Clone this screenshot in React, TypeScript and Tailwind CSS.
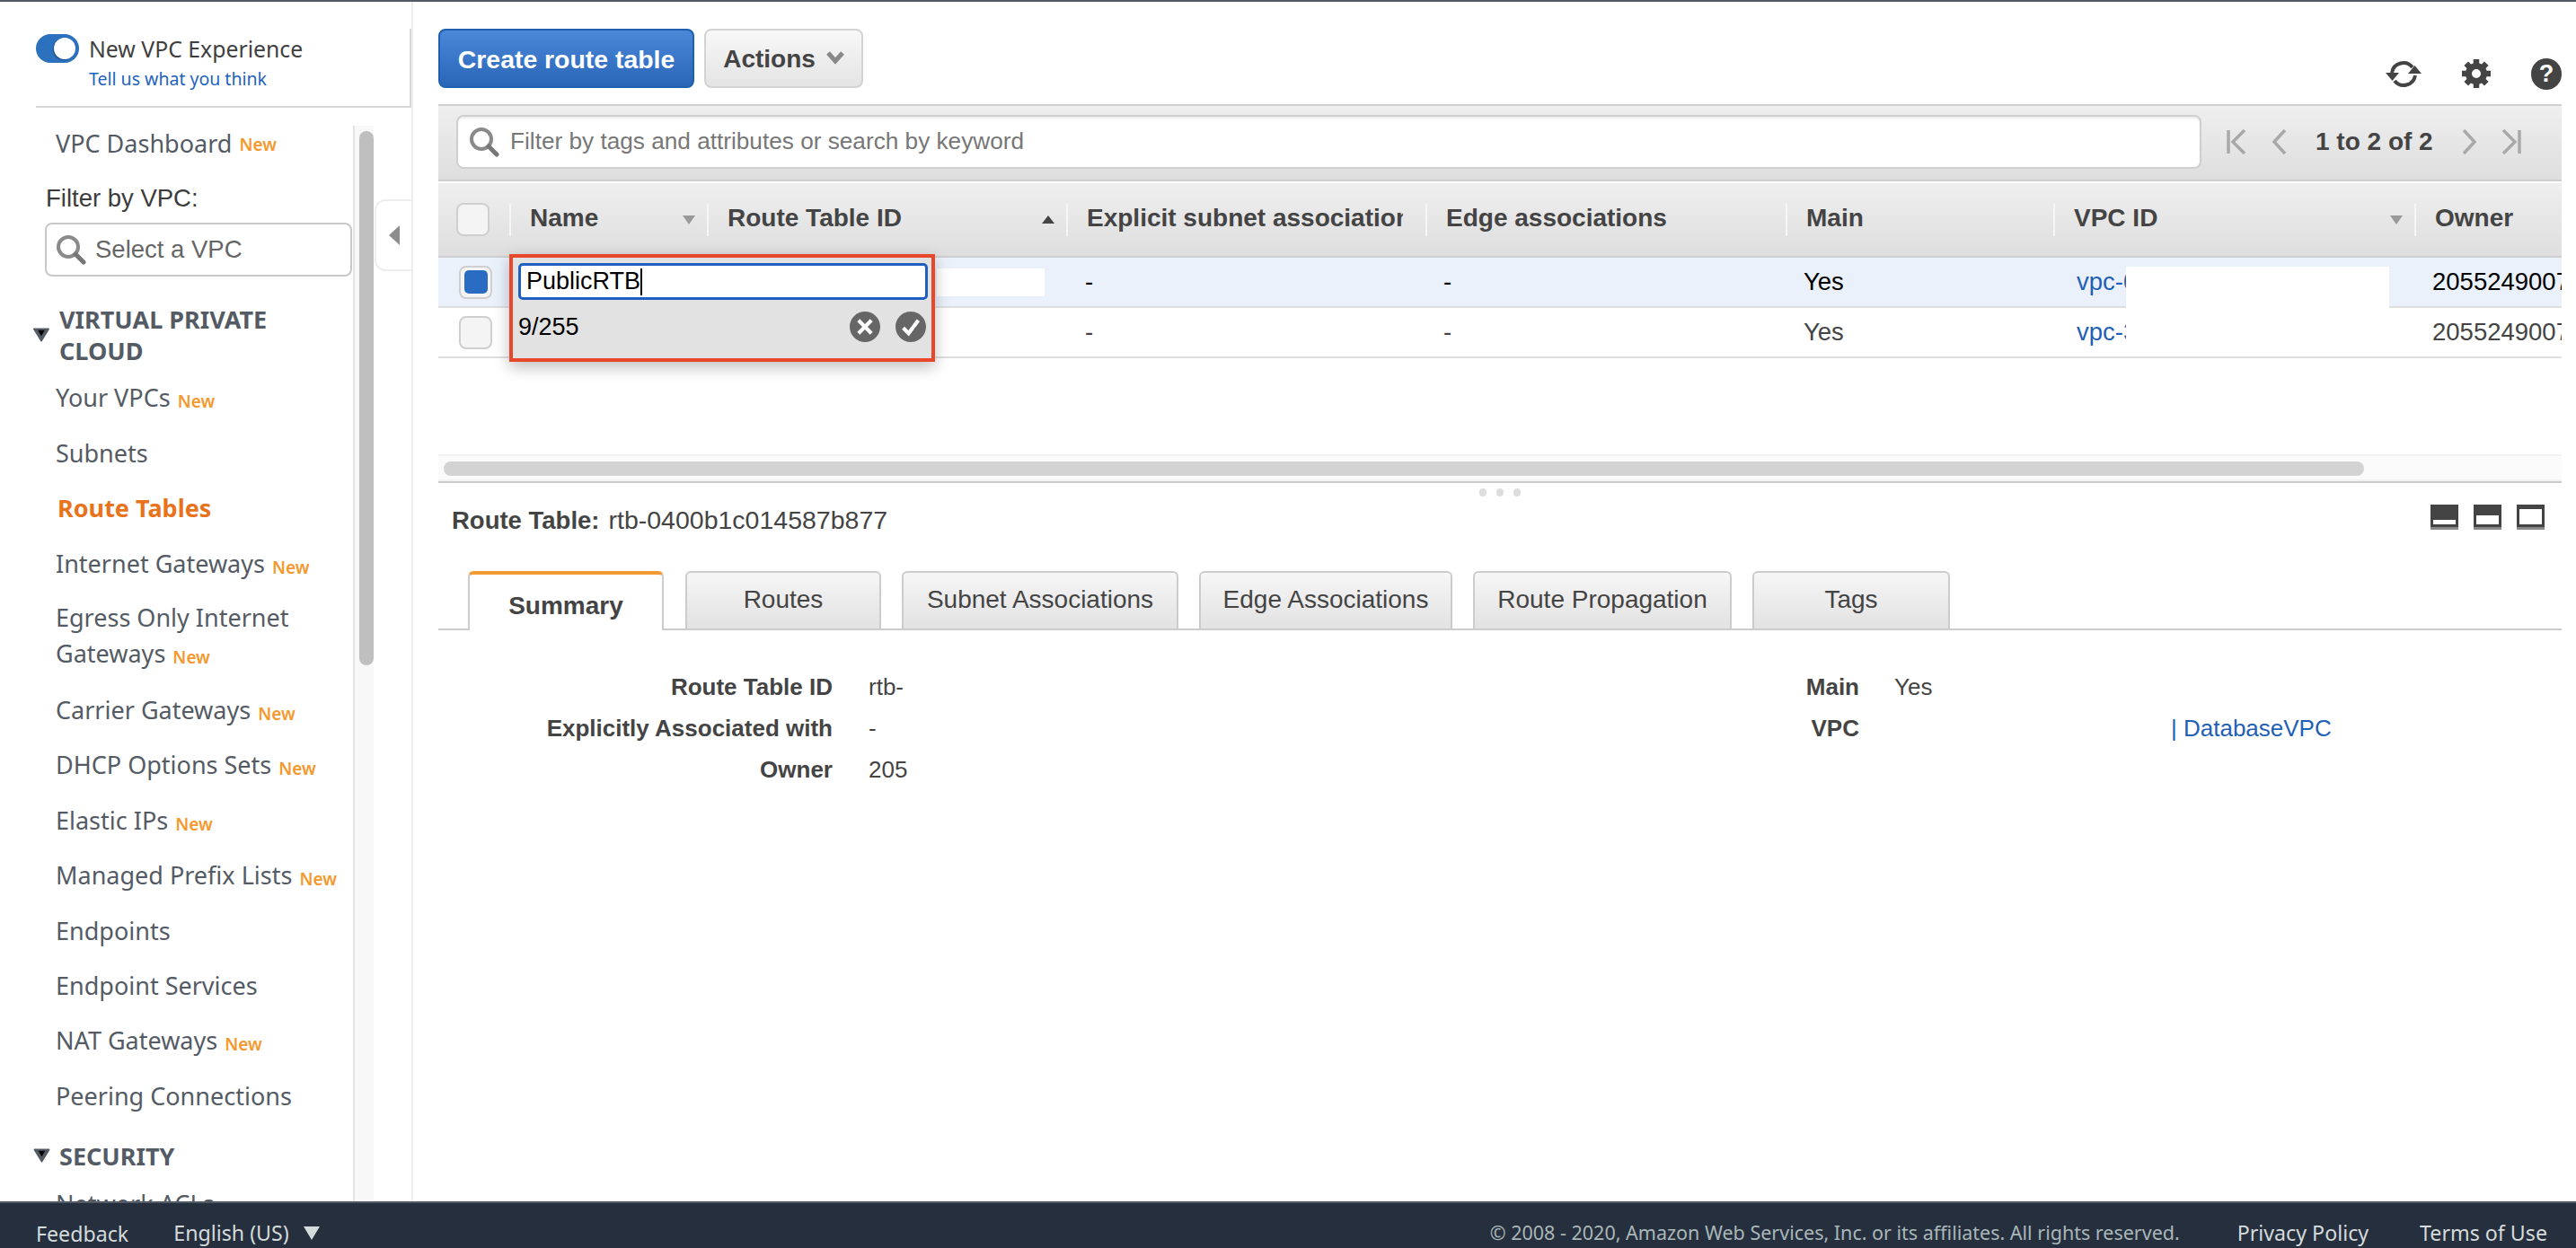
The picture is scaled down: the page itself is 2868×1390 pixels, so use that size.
import type { ReactNode } from 'react'

const ember = "font-['Noto_Sans',sans-serif]"
const helv = "font-['Liberation_Sans',Arial,sans-serif]"

const navItems: { label: ReactNode; isNew?: boolean; active?: boolean; tall?: boolean }[] = [
  { label: 'Your VPCs', isNew: true },
  { label: 'Subnets' },
  { label: 'Route Tables', active: true },
  { label: 'Internet Gateways', isNew: true },
  { label: 'Egress Only Internet Gateways', isNew: true, tall: true },
  { label: 'Carrier Gateways', isNew: true },
  { label: 'DHCP Options Sets', isNew: true },
  { label: 'Elastic IPs', isNew: true },
  { label: 'Managed Prefix Lists', isNew: true },
  { label: 'Endpoints' },
  { label: 'Endpoint Services' },
  { label: 'NAT Gateways', isNew: true },
  { label: 'Peering Connections' },
]

function NewTag() {
  return <span className="ml-2 inline-block translate-y-[1px] text-[19px] font-semibold text-[#f5992f]">New</span>
}

function SearchIcon({ className }: { className: string }) {
  return (
    <svg viewBox="0 0 34 34" className={className}>
      <circle cx="14" cy="14" r="11" fill="none" stroke="#8a8a8a" strokeWidth="4" />
      <path d="M22 22 L31 31" stroke="#777" strokeWidth="5" strokeLinecap="round" />
    </svg>
  )
}

function Caret({ className }: { className: string }) {
  return (
    <svg viewBox="0 0 20 17" className={className}>
      <path d="M1.5 1.5 H18.5 L10 15.5 Z" fill="#545b64" stroke="#545b64" strokeWidth="2" strokeLinejoin="round" />
      <path d="M6 3 H14 L10 10 Z" fill="#000" />
    </svg>
  )
}

function Sidebar() {
  return (
    <aside className={`relative flex w-[460px] shrink-0 flex-col overflow-hidden border-r-2 border-[#eeeeee] pt-[30px] ${ember}`}>
      <div className="ml-10 h-[88px] shrink-0 border-r-2 border-b-2 border-[#d8d8d8] pt-[6px]">
        <div className="flex items-center">
          <div className="flex h-8 w-12 items-center justify-end rounded-full bg-[#2c71bd] pr-[4px]">
            <div className="h-6 w-6 rounded-full bg-white shadow-[-1px_1px_1px_#1b4f8a]" />
          </div>
          <span className="ml-[11px] text-[24.8px] leading-8 text-[#3f3f3f]">New VPC Experience</span>
        </div>
        <div className="mt-[6px] ml-[59px] text-[19.5px] leading-6 text-[#1f63bd]">Tell us what you think</div>
      </div>

      <div className="flex min-h-0 flex-1">
        <div className="w-[393px] shrink-0 overflow-hidden pt-[10px]">
          <div className="flex h-[61px] items-center pl-[62px] text-[27px] whitespace-nowrap text-[#545b64]">
            VPC Dashboard
            <NewTag />
          </div>
          <div className={`mt-[10px] pl-[51px] text-[27.5px] leading-[40px] text-[#3c3c3c] ${helv}`}>Filter by VPC:</div>
          <div className="mt-[7px] ml-[50px] flex h-[60px] w-[342px] items-center rounded-lg border-2 border-[#c8c8c8] pl-[10px]">
            <SearchIcon className="h-[34px] w-[34px]" />
            <span className={`ml-[10px] text-[27.5px] text-[#666] ${helv}`}>Select a VPC</span>
          </div>
          <div className="mt-[30px] flex items-center pl-[36px]">
            <Caret className="h-[16px] w-[20px] shrink-0" />
            <div className="ml-[10px] text-[27px] leading-[35px] font-bold text-[#545b64]">
              VIRTUAL PRIVATE
              <br />
              CLOUD
            </div>
          </div>
          <ul className="mt-[5px]">
            {navItems.map((item, i) => (
              <li
                key={i}
                className={`flex items-center pl-[62px] text-[27px] ${item.tall ? 'h-[102px] w-[340px] leading-[40px]' : 'h-[61.4px]'} ${
                  item.active ? 'pl-[64px] font-bold text-[#e8731c]' : 'text-[#545b64]'
                }`}
              >
                <span>
                  {item.label}
                  {item.isNew && <NewTag />}
                </span>
              </li>
            ))}
          </ul>
          <div className="mt-[18px] flex items-center pl-[37px]">
            <Caret className="h-[16px] w-[19px] shrink-0" />
            <div className="ml-[10px] text-[27px] leading-[35px] font-bold text-[#545b64]">SECURITY</div>
          </div>
          <div className="mt-[16px] pl-[62px] text-[27px] text-[#545b64]">Network ACLs</div>
        </div>
        <div className="mt-[20px] w-[23px] shrink-0 border-l-2 border-[#e4e4e4] bg-[#f8f8f8] pt-[6px] pl-[5px]">
          <div className="h-[595px] w-4 rounded-full bg-[#bfbfbf]" />
        </div>
      </div>

      {/* collapse handle sits over the sidebar edge */}
      <div className="absolute top-[220px] right-0 flex h-[80px] w-[41px] items-center justify-center rounded-l-xl border-2 border-r-0 border-[#eeeeee] bg-white">
        <div className="h-0 w-0 border-y-[11px] border-r-[12px] border-y-transparent border-r-[#8d8d8d]" />
      </div>
    </aside>
  )
}

function Checkbox({ checked, header }: { checked?: boolean; header?: boolean }) {
  return (
    <div
      className={`flex h-[37px] w-[37px] items-center justify-center rounded-lg border-2 border-[#cfcfcf] bg-[#f4f4f4] ${header ? '' : 'ml-[3px]'}`}
    >
      {checked && <div className="h-[26px] w-[26px] rounded-[5px] bg-[#2a6cc2]" />}
    </div>
  )
}

function HeaderCell({ w, label, sort, clip }: { w: string; label: string; sort?: 'up' | 'down'; clip?: boolean }) {
  return (
    <div className={`${w} flex h-[36px] shrink-0 items-center justify-between border-l-2 border-[#f6f6f6] pr-[13px] pl-[21px]`}>
      <span className={`${clip ? 'w-[352px] overflow-hidden' : ''} -translate-y-[2px] whitespace-nowrap`}>{label}</span>
      {sort === 'down' && <div className="h-0 w-0 border-x-[7px] border-t-[10px] border-x-transparent border-t-[#999]" />}
      {sort === 'up' && <div className="h-0 w-0 border-x-[7px] border-b-[9px] border-x-transparent border-b-[#444]" />}
    </div>
  )
}

function TableRow({ selected, vpc }: { selected?: boolean; vpc: string }) {
  const color = selected ? 'bg-[#eaf1fb] text-black' : 'bg-white text-[#444]'
  return (
    <div className={`flex h-[56px] items-center border-b-2 border-[#dfdfdf] text-[27.5px] ${color}`}>
      <div className="w-[79px] shrink-0 pl-5">
        <Checkbox checked={selected} />
      </div>
      <div className="w-[620px] shrink-0">
        {selected && <div className="ml-[476px] h-[31px] w-[120px] bg-white" />}
      </div>
      <div className="w-[400px] shrink-0 pl-[21px]">-</div>
      <div className="w-[401px] shrink-0 pl-[20px]">-</div>
      <div className="w-[298px] shrink-0 pl-[20px]">Yes</div>
      <div className="flex h-full w-[402px] shrink-0 pl-[26px]">
        <span className="w-[55px] self-center overflow-hidden whitespace-nowrap text-[#1f5fb5]">{vpc}</span>
        {/* the redaction box runs over the first row's bottom rule */}
        <div className={`w-[293px] bg-white ${selected ? 'mt-[10px] h-[46px]' : 'h-[54px]'}`} />
      </div>
      <div className="pl-[20px] whitespace-nowrap">205524900700</div>
    </div>
  )
}

function Pager() {
  const stroke = { fill: 'none', stroke: '#a9a9a9', strokeWidth: 3.5 }
  return (
    <div className="flex shrink-0 items-center pl-[28px] text-[28px] text-[#444]">
      <svg viewBox="0 0 22 28" className="h-[28px] w-[22px]" {...stroke}>
        <path d="M2 1 V27 M20 1 L7 14 L20 27" />
      </svg>
      <svg viewBox="0 0 16 28" className="ml-[29px] h-[28px] w-[16px]" {...stroke}>
        <path d="M14 1 L2 14 L14 27" />
      </svg>
      <span className="ml-[32px] font-bold whitespace-nowrap text-[#444]">1 to 2 of 2</span>
      <svg viewBox="0 0 16 28" className="ml-[32px] h-[28px] w-[16px]" {...stroke}>
        <path d="M2 1 L14 14 L2 27" />
      </svg>
      <svg viewBox="0 0 22 28" className="ml-[28px] h-[28px] w-[22px]" {...stroke}>
        <path d="M20 1 V27 M2 1 L15 14 L2 27" />
      </svg>
    </div>
  )
}

function ToolIcons() {
  return (
    <div className="flex items-center pt-[32px]">
      <svg viewBox="0 0 42 36" className="h-[36px] w-[42px]">
        <path d="M8 17 A13 13 0 0 1 31 11" fill="none" stroke="#444" strokeWidth="4" />
        <path d="M34 20 A13 13 0 0 1 11 26" fill="none" stroke="#444" strokeWidth="4" />
        <path d="M26 18 H41 L33.5 9 Z" fill="#444" />
        <path d="M1 17 H16 L8.5 26 Z" fill="#444" />
      </svg>
      <svg viewBox="0 0 32 32" className="ml-[44px] h-[32px] w-[32px]">
        <circle cx="16" cy="16" r="8.5" fill="none" stroke="#444" strokeWidth="7" />
        <g stroke="#444" strokeWidth="6.5">
          <path d="M16 0 V6 M16 26 V32 M0 16 H6 M26 16 H32 M4.7 4.7 L9 9 M23 23 L27.3 27.3 M27.3 4.7 L23 9 M9 23 L4.7 27.3" />
        </g>
      </svg>
      <div
        className={`ml-[45px] flex h-[35px] w-[34px] items-center justify-center rounded-full bg-[#444] text-[27px] leading-none font-bold text-white ${helv}`}
      >
        ?
      </div>
    </div>
  )
}

function Toolbar() {
  return (
    <div className="flex h-[114px] shrink-0 items-start pt-[30px]">
      <button className="flex h-[66px] w-[285px] items-center justify-center rounded-lg border-2 border-[#1e5fb0] bg-linear-to-b from-[#4a88d8] to-[#2a66b8] pt-[2px] text-[28.4px] font-bold text-white">
        Create route table
      </button>
      <button className="ml-[11px] flex h-[66px] w-[177px] items-center justify-center rounded-lg border-2 border-[#d3d3d3] bg-linear-to-b from-[#f8f8f8] to-[#e4e4e4] pt-[2px] text-[28px] font-bold text-[#444]">
        Actions
        <svg viewBox="0 0 20 15" className="mb-[4px] ml-[12px] h-[15px] w-[20px]">
          <path d="M2 2 L10 11 L18 2" fill="none" stroke="#888" strokeWidth="5" />
        </svg>
      </button>
      <div className="flex-1" />
      <ToolIcons />
    </div>
  )
}

function NameEditor() {
  return (
    <div className="absolute top-[-4px] left-[79px] h-[120px] w-[474px] border-[4px] border-[#e9472b] bg-[#e2e2e2] p-[6px] shadow-[0_6px_16px_rgba(0,0,0,0.25)]">
      <div className="flex h-[41px] w-[456px] items-center rounded-[5px] border-[3px] border-[#1f5fc0] bg-white pl-[6px] text-[27px] text-black">
        PublicRTB
        <span className="h-[30px] w-[1.5px] bg-black" />
      </div>
      <div className="mt-[10px] flex items-center justify-between text-[27px] text-black">
        9/255
        <div className="flex items-center gap-[17px]">
          <div className="flex h-[34px] w-[34px] items-center justify-center rounded-full bg-[#666]">
            <svg viewBox="0 0 20 20" className="h-6 w-6">
              <path d="M4 4 L16 16 M16 4 L4 16" stroke="#fff" strokeWidth="3.5" />
            </svg>
          </div>
          <div className="flex h-[34px] w-[34px] items-center justify-center rounded-full bg-[#666]">
            <svg viewBox="0 0 20 20" className="h-6 w-6">
              <path d="M3 11 L8 16 L17 4" fill="none" stroke="#fff" strokeWidth="3.5" />
            </svg>
          </div>
        </div>
      </div>
    </div>
  )
}

function RouteTableGrid() {
  return (
    <div className="relative h-[390px] shrink-0 overflow-hidden">
      <div className="flex h-[86px] items-center border-y-2 border-[#cfcfcf] bg-linear-to-b from-[#efefef] to-[#dedede] pb-[3px] pl-5">
        <div className="relative flex h-[60px] w-[1943px] shrink-0 items-center rounded-lg border-2 border-[#cfcfcf] bg-white pl-[12px] shadow-[inset_0_2px_2px_#eee]">
          <SearchIcon className="h-[34px] w-[34px]" />
          <span className="ml-[12px] text-[26.2px] text-[#777]">Filter by tags and attributes or search by keyword</span>
        </div>
        <Pager />
      </div>
      <div className="mt-[2px] flex h-[83px] items-center border-b-2 border-[#cfcfcf] bg-linear-to-b from-[#efefef] to-[#dedede] text-[28px] font-bold text-[#444]">
        <div className="w-[79px] shrink-0 pl-5">
          <Checkbox header />
        </div>
        <HeaderCell w="w-[220px]" label="Name" sort="down" />
        <HeaderCell w="w-[400px]" label="Route Table ID" sort="up" />
        <HeaderCell w="w-[400px]" label="Explicit subnet associations" clip />
        <HeaderCell w="w-[401px]" label="Edge associations" />
        <HeaderCell w="w-[298px]" label="Main" />
        <HeaderCell w="w-[402px]" label="VPC ID" sort="down" />
        <HeaderCell w="w-[170px]" label="Owner" />
      </div>
      <div className="relative">
        <TableRow selected vpc="vpc-0" />
        <TableRow vpc="vpc-3" />
        <div className="absolute top-0 left-0 h-[120px]">
          <NameEditor />
        </div>
      </div>
    </div>
  )
}

function PaneIcon({ fill }: { fill: string }) {
  return (
    <div className="flex h-[28px] w-[31px] items-end border-b-[3px] border-[#888] bg-[#444] px-[3px] pb-[3px]">
      <div className={`w-full bg-white ${fill}`} />
    </div>
  )
}

const tabs = [
  { label: 'Routes', w: 'w-[218px]' },
  { label: 'Subnet Associations', w: 'w-[308px]' },
  { label: 'Edge Associations', w: 'w-[282px]' },
  { label: 'Route Propagation', w: 'w-[288px]' },
  { label: 'Tags', w: 'w-[220px]' },
]

function DetailRow({ label, children, labelW }: { label: string; children: ReactNode; labelW: string }) {
  return (
    <div className="flex h-[46px] items-center text-[26px] text-[#444]">
      <span className={`${labelW} shrink-0 text-right font-bold whitespace-nowrap`}>{label}</span>
      {children}
    </div>
  )
}

function DetailPane() {
  return (
    <div className="min-h-0 flex-1">
      <div className="relative flex h-[16px] items-start justify-center border-t-[2px] border-[#cccccc] pt-[6px]">
        <div className="flex gap-[11px]">
          <div className="h-[9px] w-[8px] rounded-sm bg-[#dddddd]" />
          <div className="h-[9px] w-[8px] rounded-sm bg-[#dddddd]" />
          <div className="h-[9px] w-[8px] rounded-sm bg-[#dddddd]" />
        </div>
      </div>
      <div className="flex h-[84px] items-start justify-between pt-[8px] pr-[19px] pl-[15px]">
        <div className="flex items-baseline pt-[4px] leading-[30px] text-[#444]">
          <b className="text-[27.5px]">Route Table:</b>
          <span className="ml-[10px] text-[28.5px]">rtb-0400b1c014587b877</span>
        </div>
        <div className="flex gap-[17px] pt-[2px]">
          <PaneIcon fill="h-[5px]" />
          <PaneIcon fill="h-[10px]" />
          <PaneIcon fill="h-[17px]" />
        </div>
      </div>
      <div className="flex h-[66px] items-end border-b-2 border-[#cccccc] pl-[33px]">
        <div className="z-10 mr-[24px] -mb-[2px] flex h-[66px] w-[218px] items-center justify-center rounded-t-md border-x-2 border-t-4 border-x-[#cccccc] border-t-[#f49a33] bg-white pt-[8px] text-[28px] font-bold text-[#444]">
          Summary
        </div>
        {tabs.map((t) => (
          <div
            key={t.label}
            className={`${t.w} mr-[23px] flex h-[64px] shrink-0 items-center justify-center rounded-t-md border-x-2 border-t-2 border-[#cccccc] bg-linear-to-b from-[#f6f6f6] to-[#e2e2e2] pb-[3px] text-[28px] text-[#444]`}
          >
            {t.label}
          </div>
        ))}
      </div>
      <div className="flex pt-[40px]">
        <div className="w-[1100px] shrink-0">
          <DetailRow label="Route Table ID" labelW="w-[439px]">
            <span className="ml-[40px]">rtb-</span>
          </DetailRow>
          <DetailRow label="Explicitly Associated with" labelW="w-[439px]">
            <span className="ml-[40px]">-</span>
          </DetailRow>
          <DetailRow label="Owner" labelW="w-[439px]">
            <span className="ml-[40px]">205</span>
          </DetailRow>
        </div>
        <div>
          <DetailRow label="Main" labelW="w-[482px]">
            <span className="ml-[39px]">Yes</span>
          </DetailRow>
          <DetailRow label="VPC" labelW="w-[482px]">
            <span className="ml-[347px] whitespace-nowrap text-[#1f5fb5]">| DatabaseVPC</span>
          </DetailRow>
        </div>
      </div>
    </div>
  )
}

function Footer() {
  return (
    <footer className={`flex h-[52px] shrink-0 items-center border-t-2 border-[#545b64] bg-[#252f3e] pt-[16px] pr-[32px] pl-[40px] text-[23.2px] leading-[30px] ${ember}`}>
      <span className="pt-[2px] text-[#d5dbdb]">Feedback</span>
      <span className="ml-[50px] text-[#d5dbdb]">English (US)</span>
      <div className="ml-[16px] h-0 w-0 border-x-[9px] border-t-[15px] border-x-transparent border-t-[#d5dbdb]" />
      <div className="flex-1" />
      <span className="text-[21.5px] text-[#aab7b8]">© 2008 - 2020, Amazon Web Services, Inc. or its affiliates. All rights reserved.</span>
      <span className="ml-[64px] text-[#d5dbdb]">Privacy Policy</span>
      <span className="ml-[57px] text-[#d5dbdb]">Terms of Use</span>
    </footer>
  )
}

export default function App() {
  return (
    <div className="flex h-[1390px] w-[2868px] flex-col overflow-hidden bg-white">
      <div className="h-[2px] shrink-0 bg-[#545b64]" />
      <div className="flex min-h-0 flex-1">
        <Sidebar />
        <main className={`flex min-w-0 flex-1 flex-col pr-[16px] pl-[28px] ${helv}`}>
          <Toolbar />
          <RouteTableGrid />
          <div className="h-[30px] shrink-0 border-y-2 border-[#f2f2f2] bg-[#fbfbfb] px-[6px] pt-[6px]">
            <div className="h-4 w-[2138px] rounded-full bg-[#d3d3d3]" />
          </div>
          <DetailPane />
        </main>
      </div>
      <Footer />
    </div>
  )
}
